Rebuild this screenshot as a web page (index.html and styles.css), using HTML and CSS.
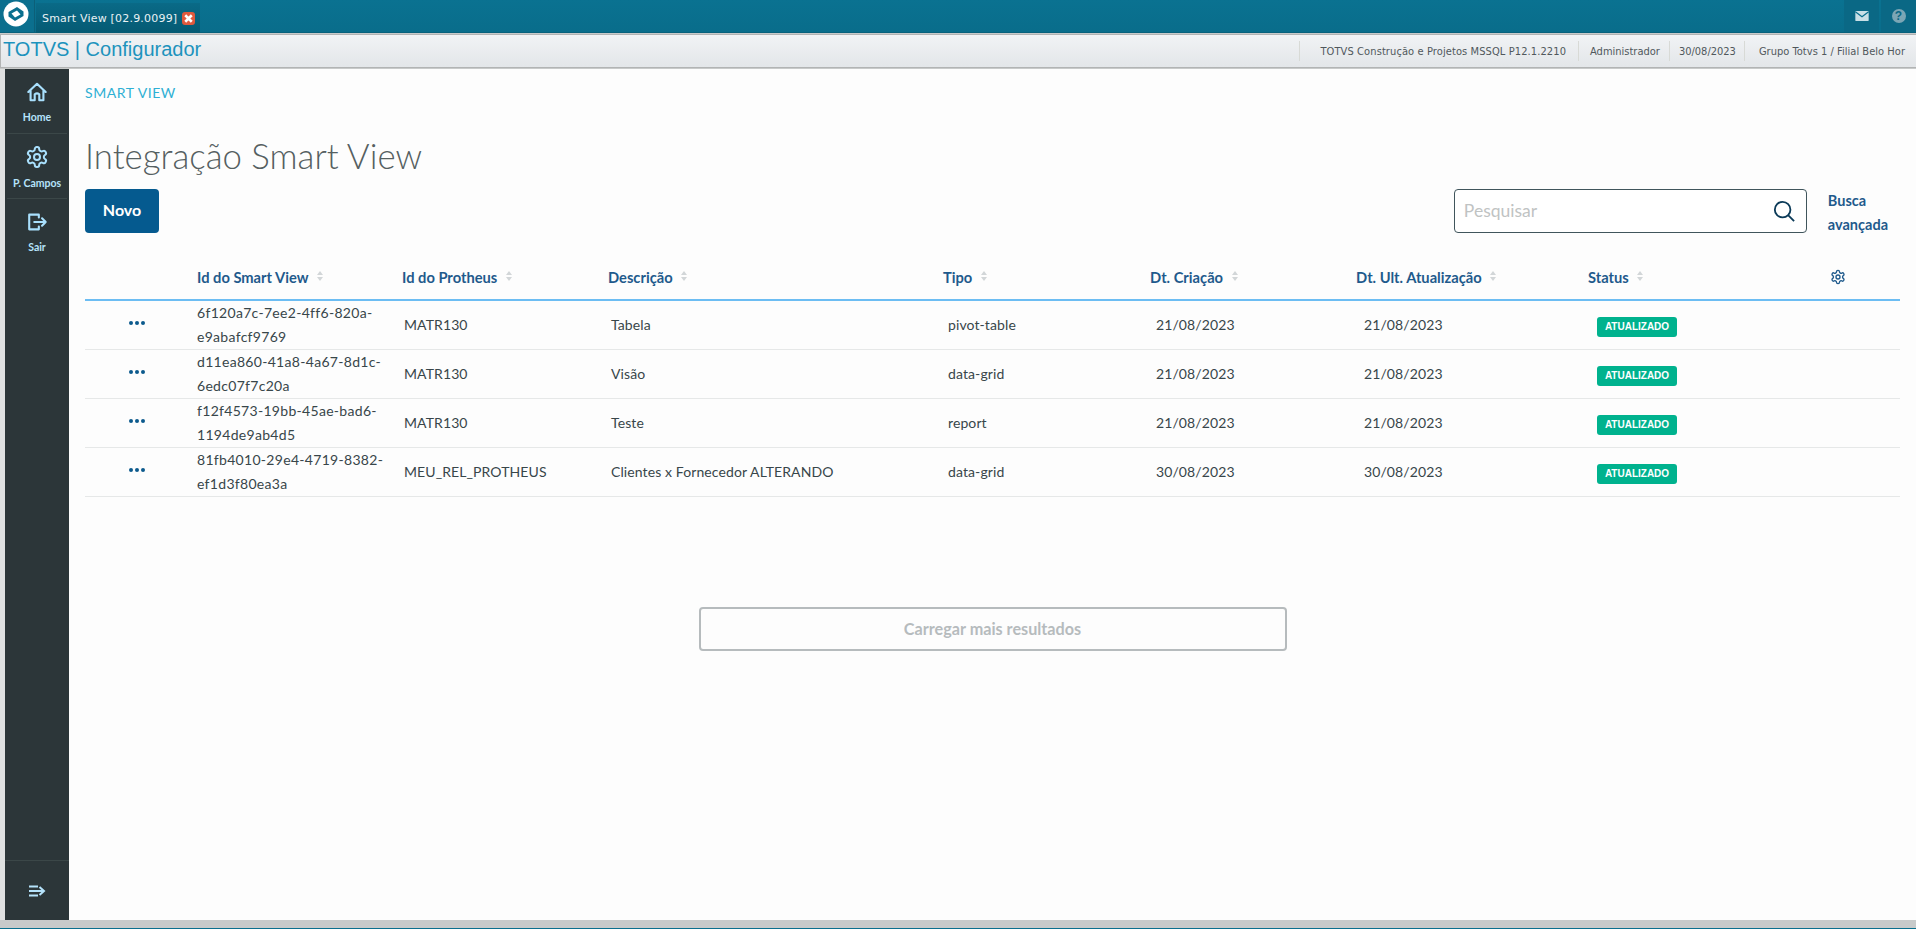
FILE: index.html
```html
<!DOCTYPE html>
<html lang="pt-BR">
<head>
<meta charset="utf-8">
<title>Smart View</title>
<link rel="stylesheet" href="styles.css">
</head>
<body>
<header class="topbar">
  <div class="logo-box">
    <svg class="logo" viewBox="0 0 26 26"><circle cx="13" cy="13" r="12.5" fill="#fff"/><path d="M5.5 11 L14 6 L20.5 10.5 V15 L12 20 L5.5 15.5 Z" fill="#0a6f8e"/><path d="M8.5 12.5 L14 9.5 L17.5 13.5 L12 16.5 Z" fill="#fff"/></svg>
  </div>
  <div class="tab">
    <span>Smart View [02.9.0099]</span>
    <span class="tab-close"><svg viewBox="0 0 12 12"><path d="M3 3 L9 9 M9 3 L3 9" stroke="#fff" stroke-width="2.4"/></svg></span>
  </div>
  <div class="top-actions">
    <div class="top-btn"><svg viewBox="0 0 16 12" class="mail"><rect width="16" height="12" rx="1" fill="#c9dfe6"/><path d="M0 1 L8 7 L16 1" fill="none" stroke="#0a6f8e" stroke-width="1.5"/></svg></div>
    <div class="top-btn"><span class="help">?</span></div>
  </div>
</header>
<div class="infobar">
  <div class="app-title">TOTVS | Configurador</div>
  <div class="info-items">
    <span class="info-item info-env">TOTVS Construção e Projetos MSSQL P12.1.2210</span>
    <span class="info-item info-user">Administrador</span>
    <span class="info-item info-date">30/08/2023</span>
    <span class="info-item info-branch">Grupo Totvs 1 / Filial Belo Hor</span>
  </div>
</div>
<div class="workspace">
  <nav class="sidebar">
    <a class="nav-item">
      <svg viewBox="0 0 24 24" class="nav-icon"><path d="M2.5 12 L12 3 L21.5 12 M5 10 V21 H9.5 V14.5 Q12 12.5 14.5 14.5 V21 H19 V10"/></svg>
      <span>Home</span>
    </a>
    <a class="nav-item">
      <svg viewBox="0 0 24 24" class="nav-icon nav-gear"><circle cx="12" cy="12" r="3"/><path d="M12.22 2h-.44a2 2 0 0 0-2 2v.18a2 2 0 0 1-1 1.73l-.43.25a2 2 0 0 1-2 0l-.15-.08a2 2 0 0 0-2.73.73l-.22.38a2 2 0 0 0 .73 2.73l.15.1a2 2 0 0 1 1 1.72v.51a2 2 0 0 1-1 1.74l-.15.09a2 2 0 0 0-.73 2.73l.22.38a2 2 0 0 0 2.73.73l.15-.08a2 2 0 0 1 2 0l.43.25a2 2 0 0 1 1 1.73V20a2 2 0 0 0 2 2h.44a2 2 0 0 0 2-2v-.18a2 2 0 0 1 1-1.73l.43-.25a2 2 0 0 1 2 0l.15.08a2 2 0 0 0 2.73-.73l.22-.39a2 2 0 0 0-.73-2.73l-.15-.08a2 2 0 0 1-1-1.74v-.5a2 2 0 0 1 1-1.74l.15-.09a2 2 0 0 0 .73-2.73l-.22-.38a2 2 0 0 0-2.73-.73l-.15.08a2 2 0 0 1-2 0l-.43-.25a2 2 0 0 1-1-1.73V4a2 2 0 0 0-2-2z"/></svg>
      <span>P. Campos</span>
    </a>
    <a class="nav-item nav-last">
      <svg viewBox="0 0 24 24" class="nav-icon"><path d="M14 7 V4 H3.5 V20 H14 V17 M9 12 H21.5 M17.5 8 L21.5 12 L17.5 16"/></svg>
      <span>Sair</span>
    </a>
    <div class="nav-foot">
      <svg viewBox="0 0 18 12" class="collapse"><path d="M1 1.5 H10 M1 6 H15 M1 10.5 H10 M11.5 2 L16 6 L11.5 10"/></svg>
    </div>
  </nav>
  <main class="content">
    <div class="crumb">SMART VIEW</div>
    <h1 class="page-title">Integração Smart View</h1>
    <div class="toolbar">
      <button class="btn-new">Novo</button>
      <div class="search-group">
        <div class="search-box">
          <span class="placeholder">Pesquisar</span>
          <svg viewBox="0 0 24 24" class="search-icon"><circle cx="10.5" cy="10.5" r="8.5"/><path d="M16.5 16.5 L23 23"/></svg>
        </div>
        <a class="adv-search">Busca<br>avançada</a>
      </div>
    </div>
    <table class="grid">
      <colgroup>
        <col class="c-act"><col class="c-id"><col class="c-pr"><col class="c-desc"><col class="c-tipo"><col class="c-dt"><col class="c-up"><col class="c-st"><col class="c-cfg">
      </colgroup>
      <thead>
        <tr>
          <th></th>
          <th>Id do Smart View <span class="sort"></span></th>
          <th>Id do Protheus <span class="sort"></span></th>
          <th>Descrição <span class="sort"></span></th>
          <th>Tipo <span class="sort"></span></th>
          <th>Dt. Criação <span class="sort"></span></th>
          <th>Dt. Ult. Atualização <span class="sort"></span></th>
          <th>Status <span class="sort"></span></th>
          <th><svg viewBox="0 0 24 24" class="cfg-icon"><circle cx="12" cy="12" r="3"/><path d="M12.22 2h-.44a2 2 0 0 0-2 2v.18a2 2 0 0 1-1 1.73l-.43.25a2 2 0 0 1-2 0l-.15-.08a2 2 0 0 0-2.73.73l-.22.38a2 2 0 0 0 .73 2.73l.15.1a2 2 0 0 1 1 1.72v.51a2 2 0 0 1-1 1.74l-.15.09a2 2 0 0 0-.73 2.73l.22.38a2 2 0 0 0 2.73.73l.15-.08a2 2 0 0 1 2 0l.43.25a2 2 0 0 1 1 1.73V20a2 2 0 0 0 2 2h.44a2 2 0 0 0 2-2v-.18a2 2 0 0 1 1-1.73l.43-.25a2 2 0 0 1 2 0l.15.08a2 2 0 0 0 2.73-.73l.22-.39a2 2 0 0 0-.73-2.73l-.15-.08a2 2 0 0 1-1-1.74v-.5a2 2 0 0 1 1-1.74l.15-.09a2 2 0 0 0 .73-2.73l-.22-.38a2 2 0 0 0-2.73-.73l-.15.08a2 2 0 0 1-2 0l-.43-.25a2 2 0 0 1-1-1.73V4a2 2 0 0 0-2-2z"/></svg></th>
        </tr>
      </thead>
      <tbody>
        <tr>
          <td class="dots"><i></i><i></i><i></i></td>
          <td class="id">6f120a7c-7ee2-4ff6-820a-e9abafcf9769</td>
          <td>MATR130</td><td>Tabela</td><td>pivot-table</td><td>21/08/2023</td><td>21/08/2023</td>
          <td><span class="badge">ATUALIZADO</span></td><td></td>
        </tr>
        <tr>
          <td class="dots"><i></i><i></i><i></i></td>
          <td class="id">d11ea860-41a8-4a67-8d1c-6edc07f7c20a</td>
          <td>MATR130</td><td>Visão</td><td>data-grid</td><td>21/08/2023</td><td>21/08/2023</td>
          <td><span class="badge">ATUALIZADO</span></td><td></td>
        </tr>
        <tr>
          <td class="dots"><i></i><i></i><i></i></td>
          <td class="id">f12f4573-19bb-45ae-bad6-1194de9ab4d5</td>
          <td>MATR130</td><td>Teste</td><td>report</td><td>21/08/2023</td><td>21/08/2023</td>
          <td><span class="badge">ATUALIZADO</span></td><td></td>
        </tr>
        <tr>
          <td class="dots"><i></i><i></i><i></i></td>
          <td class="id">81fb4010-29e4-4719-8382-ef1d3f80ea3a</td>
          <td>MEU_REL_PROTHEUS</td><td>Clientes x Fornecedor ALTERANDO</td><td>data-grid</td><td>30/08/2023</td><td>30/08/2023</td>
          <td><span class="badge">ATUALIZADO</span></td><td></td>
        </tr>
      </tbody>
    </table>
    <div class="more-wrap"><button class="btn-more">Carregar mais resultados</button></div>
  </main>
</div>
<div class="bottom-edge"></div>
</body>
</html>
```

FILE: styles.css
```css
* { box-sizing: border-box; }
html, body { height: 100%; }
body {
  margin: 0;
  display: flex;
  flex-direction: column;
  height: 929px;
  overflow: hidden;
  background: #c8caca;
  font-family: Lato, "Open Sans", sans-serif;
  color: #2c3739;
}
.topbar {
  height: 33px;
  flex: none;
  display: flex;
  background: linear-gradient(#0a7291, #096d8b);
  border-bottom: 1px solid #07617c;
}
.logo-box { width: 35px; height: 32px; display: flex; padding: 1px 0 0 3px; background: #0b6f8e; border-right: 1px solid #0c5f78; }
.logo { width: 26px; height: 26px; }
.tab {
  width: 164px;
  height: 30px;
  margin-top: 3px;
  margin-left: 1px;
  display: flex;
  align-items: center;
  gap: 5px;
  padding-left: 6px;
  background: linear-gradient(#0a6a87, #055a73);
  color: #eaf2f4;
  font: 11px "DejaVu Sans", sans-serif;
  letter-spacing: .2px;
}
.tab-close { width: 13px; height: 13px; border-radius: 3px; background: #e0593d; display: flex; }
.tab-close svg { width: 13px; height: 13px; }
.top-actions { margin-left: auto; display: flex; gap: 2px; height: 32px; }
.top-btn { width: 35px; display: flex; align-items: center; justify-content: center; background: #0a6885; }
.mail { width: 14px; height: 10px; }
.help { width: 14px; height: 14px; border-radius: 50%; background: #7ba6b5; color: #0a6885; font: bold 12px/14px "Liberation Sans", sans-serif; text-align: center; }
.infobar {
  height: 34px;
  flex: none;
  display: flex;
  align-items: center;
  justify-content: space-between;
  margin-top: 1px;
  padding: 0 0 0 2px;
  background: linear-gradient(#f1f3f5, #e3e6e9);
  border: 1px solid #b2b4b4;
  border-width: 1px 0 1px 1px;
}
.app-title { font: 20px "Liberation Sans", sans-serif; color: #1d93bd; padding-bottom: 4px; }
.info-items { display: flex; height: 28px; align-items: center; font: 11px "DejaVu Sans Condensed", "DejaVu Sans", sans-serif; color: #50585c; padding-right: 11px; }
.info-item { display: flex; align-items: center; height: 20px; border-left: 1px solid #d8dad6; }
.info-env { padding: 0 12px 0 20px; letter-spacing: .1px; }
.info-user { padding: 0 9px 0 11px; }
.info-date { padding: 0 8px 0 9px; }
.info-branch { padding-left: 14px; letter-spacing: .03px; }
.workspace {
  flex: 1;
  min-height: 0;
  display: flex;
  padding-left: 5px;
  margin-top: 1px;
  background: #dfe1e1;
}
.sidebar {
  width: 64px;
  flex: none;
  display: flex;
  flex-direction: column;
  background: #2c3639;
  color: #b5e3fb;
  font: bold 10.5px Lato, sans-serif;
}
.nav-item {
  height: 65px;
  margin: 0 2px;
  display: flex;
  flex-direction: column;
  align-items: center;
  justify-content: flex-start;
  padding-top: 12px;
  gap: 8px;
  border-bottom: 1px solid #3b4748;
}
.nav-last { border-bottom: 0; }
.nav-icon { width: 22px; height: 22px; fill: none; stroke: #a9e0fd; stroke-width: 2.3; stroke-linejoin: round; stroke-linecap: round; }
.nav-gear { width: 24px; height: 24px; margin-top: -1px; stroke-width: 2; }
.nav-foot {
  margin-top: auto;
  height: 60px;
  border-top: 1px solid #3b4748;
  display: flex;
  align-items: center;
  justify-content: center;
}
.collapse { width: 18px; height: 12px; fill: none; stroke: #b5e3fb; stroke-width: 2; }
.content {
  flex: 1;
  min-width: 0;
  background: #fdfdfd;
  padding: 0 16px;
}
.crumb { margin-top: 14px; font: 14px/20px Lato, sans-serif; color: #2fb0d4; letter-spacing: .55px; }
.page-title { margin: 31px 0 0; font: 300 34.8px/44px Lato, sans-serif; color: #555f61; }
.toolbar { display: flex; justify-content: space-between; margin-top: 11px; height: 44px; }
.btn-new { width: 74px; height: 44px; padding: 0 0 4px; border: 0; border-radius: 4px; background: #055a8f; color: #fff; font: bold 16px Lato, sans-serif; }
.search-group { display: flex; gap: 21px; align-items: flex-start; padding-right: 12px; }
.search-box {
  width: 353px;
  height: 44px;
  display: flex;
  align-items: center;
  justify-content: space-between;
  padding: 0 11px 0 9px;
  border: 1px solid #40555c;
  border-radius: 4px;
  background: #fff;
}
.placeholder { font: 17.5px Lato, sans-serif; color: #bfc3c3; padding-bottom: 2px; }
.search-icon { width: 22px; height: 22px; fill: none; stroke: #0b3a58; stroke-width: 2; }
.adv-search { font: bold 14.5px/24px Lato, sans-serif; color: #1f5a8c; }
.grid { width: 1815px; border-collapse: collapse; table-layout: fixed; margin-top: 22px; font: 14px/24px Lato, sans-serif; }
.c-act { width: 112px; } .c-id { width: 205px; } .c-pr { width: 206px; } .c-desc { width: 335px; }
.c-tipo { width: 207px; } .c-dt { width: 206px; } .c-up { width: 232px; } .c-st { width: 244px; } .c-cfg { width: 68px; }
thead th {
  height: 45px;
  padding: 0;
  text-align: left;
  font: bold 14.7px Lato, sans-serif;
  color: #1f5a8c;
  border-bottom: 2px solid #6cbdf3;
  white-space: nowrap;
}
.sort { display: inline-block; width: 6px; height: 10px; margin-left: 5px; position: relative; vertical-align: 2px; }
.sort::before, .sort::after { content: ""; position: absolute; left: 0; border: 3px solid transparent; }
.sort::before { top: -3px; border-bottom: 4px solid #d2d6d8; }
.sort::after { bottom: -3px; border-top: 4px solid #d2d6d8; }
.cfg-icon { width: 16px; height: 16px; margin-left: -2px; fill: none; stroke: #1f5a8c; stroke-width: 2; stroke-linejoin: round; display: block; }
tbody td { height: 49px; padding: 0 0 1px 2px; border-bottom: 1px solid #e6e8e8; color: #38464a; vertical-align: middle; letter-spacing: .1px; }
tbody td.id { padding: 0; word-break: break-word; letter-spacing: .3px; }
tbody td:nth-child(4) { padding-left: 3px; }
tbody td:nth-child(5) { padding-left: 5px; }
tbody td:nth-child(6) { padding-left: 6px; }
tbody td:nth-child(7) { padding-left: 8px; }
tbody td:nth-child(8) { padding-left: 9px; }
tbody td.dots { padding: 0 0 4px 44px; white-space: nowrap; }
.dots i { display: inline-block; width: 4px; height: 4px; border-radius: 50%; background: #0c5a8d; margin-right: 2px; vertical-align: 3px; }
.badge { display: inline-block; width: 80px; text-align: center; height: 20px; margin-top: 3px; border-radius: 3px; background: #00b28e; color: #fff; font: bold 10px/20px "Liberation Sans", sans-serif; letter-spacing: 0; }
.more-wrap { display: flex; justify-content: center; margin-top: 110px; }
.btn-more { width: 588px; height: 44px; padding: 0 0 2px; background: #fdfdfd; border: 2px solid #b6bbbd; border-radius: 4px; color: #b6bbbd; font: bold 16.2px Lato, sans-serif; }
.bottom-edge { height: 9px; flex: none; background: #c8caca; border-bottom: 1px solid #0a6f8e; }
```
